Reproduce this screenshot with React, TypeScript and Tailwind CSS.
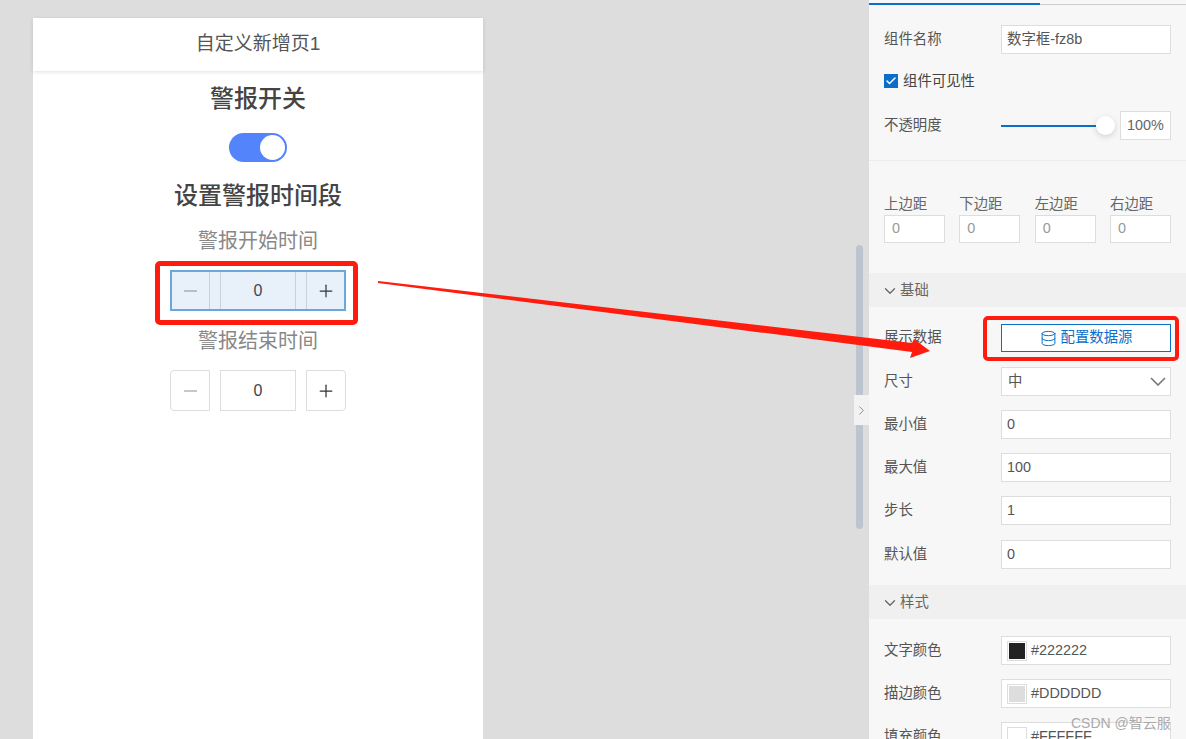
import React from "react";
import { Check, ChevronDown, ChevronRight, Database, Plus } from "lucide-react";

const Stepper = ({ selected }: { selected?: boolean }) => {
  return (
    <div className="relative flex gap-[10px] h-[41px] w-[176px] text-[#444444]">
      <div className="w-[40px] flex items-center justify-center border border-[#dddddd] rounded-l-[4px]">
        <div className="w-[13px] h-[2px] bg-[#c8c8c8]"></div>
      </div>
      <div className="w-[76px] flex items-center justify-center border border-[#dddddd] text-[16px]">
        0
      </div>
      <div className="w-[40px] flex items-center justify-center border border-[#dddddd] rounded-r-[4px] text-[#333333]">
        <Plus size={20} strokeWidth={1.5} />
      </div>
      {selected && (
        <>
          <div className="absolute inset-0 border-2 border-[#6aa8dc] bg-[#1f6fc0]/10"></div>
          <div className="absolute left-[-15px] top-[-9px] w-[203px] h-[64px] border-[5px] border-[#ff1c0e] rounded-[5px]"></div>
        </>
      )}
    </div>
  );
};

const Field = ({ label, value, top }: { label: string; value: string; top: string }) => {
  return (
    <div className={`flex items-center justify-between h-[29px] ${top}`}>
      <div className="text-[#555555]">{label}</div>
      <div className="w-[170px] h-[29px] bg-white border border-[#dddddd] flex items-center pl-[5px] text-[#555555]">
        {value}
      </div>
    </div>
  );
};

const ColorField = ({ label, value, color, top }: { label: string; value: string; color: string; top: string }) => {
  return (
    <div className={`flex items-center justify-between h-[29px] ${top}`}>
      <div className="text-[#555555]">{label}</div>
      <div className="w-[170px] h-[29px] bg-white border border-[#dddddd] flex items-center pl-[5px] gap-[4px] text-[#555555]">
        <div className="w-[20px] h-[20px] border border-[#dddddd] p-px">
          <div className={`w-full h-full ${color}`}></div>
        </div>
        {value}
      </div>
    </div>
  );
};

const SectionTitle = ({ title, top }: { title: string; top: string }) => {
  return (
    <div className={`h-[34px] bg-[#f0f0f0] flex items-center gap-px pt-[2px] pl-[12px] pr-[15px] text-[#666666] ${top}`}>
      <ChevronDown size={18} strokeWidth={1.7} />
      {title}
    </div>
  );
};

const MarginInput = ({ label }: { label: string }) => {
  return (
    <div className="w-[61px]">
      <div className="h-[19px] flex items-center text-[#666666]">{label}</div>
      <div className="h-[28px] mt-px bg-white border border-[#dddddd] flex items-center pl-[7px] text-[#999999]">
        0
      </div>
    </div>
  );
};

const App = () => {
  return (
    <div
      className="relative flex w-[1186px] h-[739px] overflow-hidden bg-[#dddddd] text-[14.4px]"
      style={{ fontFamily: '"Liberation Sans", "Noto Sans CJK SC", sans-serif' }}
    >
      <div className="w-[869px] pl-[33px] pt-[18px]">
        <div className="w-[450px] h-[721px] bg-white flex flex-col items-center">
          <div className="w-full h-[53px] flex items-center justify-center text-[19px] text-[#555555] shadow-[0_1px_4px_rgba(0,0,0,0.12)]">
            自定义新增页1
          </div>
          <div className="h-[54px] pt-[2px] flex items-center text-[24px] font-medium text-[#444444]">警报开关</div>
          <div className="mt-[8px] w-[58px] h-[29px] rounded-full bg-[#5384fb] flex items-center justify-end pr-[2px]">
            <div className="w-[25px] h-[25px] rounded-full bg-white"></div>
          </div>
          <div className="mt-[6px] h-[54px] pt-[2px] flex items-center text-[24px] font-medium text-[#444444]">设置警报时间段</div>
          <div className="mt-[3px] h-[30px] pt-[2px] flex items-center text-[20px] text-[#888888]">警报开始时间</div>
          <div className="mt-[15px]">
            <Stepper selected />
          </div>
          <div className="mt-[14px] h-[30px] pt-[2px] flex items-center text-[20px] text-[#888888]">警报结束时间</div>
          <div className="mt-[15px]">
            <Stepper />
          </div>
        </div>
      </div>

      <div className="w-[317px] bg-[#f7f7f7]">
        <div className="flex h-[5px] items-end">
          <div className="w-[171px] h-[2px] bg-[#0b6fc9]"></div>
          <div className="flex-1 h-px bg-[#cccccc]"></div>
        </div>

        <div className="px-[15px]">
          <Field label="组件名称" value="数字框-fz8b" top="mt-[20px]" />
          <div className="mt-[20px] h-[14px] flex items-center gap-[5px] text-[#444444]">
            <div className="w-[14px] h-[14px] bg-[#0b6fc9] flex items-center justify-center text-white">
              <Check size={12} strokeWidth={3} />
            </div>
            <span className="mt-[2px]">组件可见性</span>
          </div>
          <div className="mt-[23px] h-[29px] flex items-center justify-between">
            <div className="text-[#555555]">不透明度</div>
            <div className="flex items-center w-[170px]">
              <div className="w-[95px] h-[2px] bg-[#0b6fc9]"></div>
              <div className="w-[19px] h-[19px] rounded-full bg-white shadow-[0_2px_6px_rgba(0,0,0,0.15)]"></div>
              <div className="ml-[5px] w-[51px] h-[29px] bg-white border border-[#dddddd] flex items-center justify-center text-[#666666]">
                100%
              </div>
            </div>
          </div>
        </div>

        <div className="mt-[20px] h-px bg-[#ececec]"></div>

        <div className="px-[15px] mt-[34px] flex justify-between">
          <MarginInput label="上边距" />
          <MarginInput label="下边距" />
          <MarginInput label="左边距" />
          <MarginInput label="右边距" />
        </div>

        <SectionTitle title="基础" top="mt-[30px]" />

        <div className="px-[15px]">
          <div className="mt-[17px] h-[28px] flex items-center justify-between">
            <div className="text-[#555555]">展示数据</div>
            <div className="w-[170px] h-[28px] bg-white border border-[#0b6fc9] flex items-center justify-center gap-[4px] text-[#0b6fc9]">
              <Database size={17} strokeWidth={1.4} />
              配置数据源
            </div>
          </div>
          <div className="mt-[15px] h-[29px] flex items-center justify-between">
            <div className="text-[#555555]">尺寸</div>
            <div className="w-[170px] h-[29px] bg-white border border-[#dddddd] flex items-center justify-between pl-[6px] pr-[4px] text-[#555555]">
              中
              <svg width="16" height="9" viewBox="0 0 16 9" fill="none" stroke="#777777" strokeWidth="1.6">
                <polyline points="1,1 8,8 15,1" />
              </svg>
            </div>
          </div>
          <Field label="最小值" value="0" top="mt-[14px]" />
          <Field label="最大值" value="100" top="mt-[14px]" />
          <Field label="步长" value="1" top="mt-[14px]" />
          <Field label="默认值" value="0" top="mt-[15px]" />
        </div>

        <SectionTitle title="样式" top="mt-[16px]" />

        <div className="px-[15px]">
          <ColorField label="文字颜色" value="#222222" color="bg-[#222222]" top="mt-[17px]" />
          <ColorField label="描边颜色" value="#DDDDDD" color="bg-[#dddddd]" top="mt-[14px]" />
          <ColorField label="填充颜色" value="#FFFFFF" color="bg-white" top="mt-[14px]" />
        </div>
      </div>

      {/* scrollbar and collapse handle sit on the canvas edge */}
      <div className="absolute left-[856px] top-[245px] w-[7px] h-[284px] rounded-full bg-[#bcc5cf]"></div>
      <div className="absolute left-[854px] top-[395px] w-[15px] h-[30px] bg-[#f2f2f2] flex items-center justify-center text-[#777777]">
        <ChevronRight size={15} strokeWidth={1.3} />
      </div>

      {/* annotations */}
      <div className="absolute left-[983px] top-[316px] w-[196px] h-[45px] border-[4px] border-[#ff1c0e] rounded-[5px]"></div>
      <svg className="absolute left-0 top-0" width="1186" height="739">
        <polygon points="378,281 912,343 914,339 930,351 910,358 912,352 378,283" fill="#ff1c0e" />
      </svg>
      <div className="absolute left-[1071px] top-[713px] text-[14px] text-[#aaaaaa]">CSDN @智云服</div>
    </div>
  );
};

export default App;
